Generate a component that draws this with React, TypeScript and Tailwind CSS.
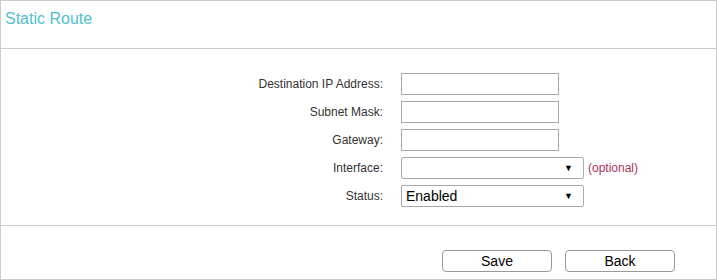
import React from "react";

function Row({ label, children }: { label: string; children: React.ReactNode }) {
  return (
    <div className="flex items-center h-[22px]">
      <div className="w-[382px] text-right text-[12px] text-[#333] -mt-[1px]">{label}</div>
      <div className="ml-[18px] flex items-center">{children}</div>
    </div>
  );
}

function TextBox() {
  return <div className="w-[158px] h-[22px] border border-[#a9a9a9] bg-white" />;
}

function Select({ value }: { value?: string }) {
  return (
    <div className="w-[183px] h-[22px] border border-[#a9a9a9] rounded-[2px] bg-white flex items-center justify-between pl-[4px] pr-[10px]">
      <span className="text-[14px] text-black leading-none">{value ?? ""}</span>
      <span className="text-[9px] text-black leading-none">▼</span>
    </div>
  );
}

export default function App() {
  return (
    <div
      className="w-[717px] h-[280px] border border-[#cccccc] bg-white flex flex-col"
      style={{ fontFamily: '"Liberation Sans", Arial, sans-serif' }}
    >
      <div className="h-[48px] border-b border-[#cccccc] pl-[4px] pt-[9px]">
        <div className="text-[16px] leading-[18px] text-[#4fc0cf]">Static Route</div>
      </div>
      <div className="h-[177px] border-b border-[#cccccc] pt-[24px] flex flex-col gap-[6px]">
        <Row label="Destination IP Address:">
          <TextBox />
        </Row>
        <Row label="Subnet Mask:">
          <TextBox />
        </Row>
        <Row label="Gateway:">
          <TextBox />
        </Row>
        <Row label="Interface:">
          <Select />
          <span className="ml-[4px] text-[12px] text-[#a8325e]">(optional)</span>
        </Row>
        <Row label="Status:">
          <Select value="Enabled" />
        </Row>
      </div>
      <div className="flex-1 pt-[24px] pl-[441px] flex gap-[13px] items-start">
        <button className="w-[110px] h-[22px] border border-[#999] rounded-[4px] bg-white text-[14px] text-black leading-none">
          Save
        </button>
        <button className="w-[110px] h-[22px] border border-[#999] rounded-[4px] bg-white text-[14px] text-black leading-none">
          Back
        </button>
      </div>
    </div>
  );
}
